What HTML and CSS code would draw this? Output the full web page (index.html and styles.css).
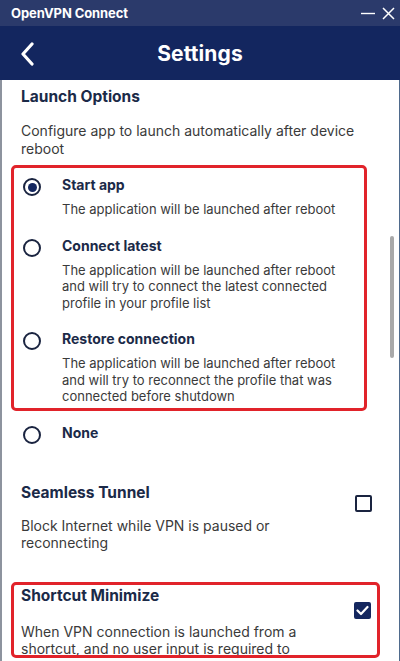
FILE: index.html
```html
<!DOCTYPE html>
<html lang="en">
<head>
<meta charset="utf-8">
<title>OpenVPN Connect - Settings</title>
<link rel="stylesheet" href="styles.css">
</head>
<body>
<div class="window">
  <div class="titlebar">
    <span class="app-name">OpenVPN Connect</span>
    <div class="win-controls">
      <svg class="win-btn" width="16" height="16" viewBox="0 0 16 16"><line x1="1" y1="8.5" x2="15" y2="8.5" stroke="#fff" stroke-width="1.4"/></svg>
      <svg class="win-btn" width="13" height="13" viewBox="0 0 13 13"><path d="M1 1 L12 12 M12 1 L1 12" stroke="#fff" stroke-width="1.5" fill="none"/></svg>
    </div>
  </div>
  <header class="header">
    <span class="back">
      <svg width="16" height="24" viewBox="0 0 16 24"><polyline points="12,2 3,12 12,22" fill="none" stroke="#fff" stroke-width="3.2" stroke-linecap="round" stroke-linejoin="round"/></svg>
    </span>
    <h1 class="page-title">Settings</h1>
  </header>
  <main class="content">
    <section class="section">
      <h2 class="section-title">Launch Options</h2>
      <p class="section-desc">Configure app to launch automatically after device reboot</p>
      <div class="highlight highlight-radios">
        <div class="option">
          <span class="radio checked"></span>
          <div class="option-body">
            <div class="option-label">Start app</div>
            <p class="option-desc">The application will be launched after reboot</p>
          </div>
        </div>
        <div class="option">
          <span class="radio"></span>
          <div class="option-body">
            <div class="option-label">Connect latest</div>
            <p class="option-desc">The application will be launched after reboot and will try to connect the latest connected profile in your profile list</p>
          </div>
        </div>
        <div class="option">
          <span class="radio"></span>
          <div class="option-body">
            <div class="option-label">Restore connection</div>
            <p class="option-desc">The application will be launched after reboot and will try to reconnect the profile that was connected before shutdown</p>
          </div>
        </div>
      </div>
      <div class="option option-none">
        <span class="radio"></span>
        <div class="option-body">
          <div class="option-label">None</div>
        </div>
      </div>
    </section>

    <section class="section toggle seamless">
      <div class="toggle-text">
        <h2 class="section-title">Seamless Tunnel</h2>
        <p class="section-desc">Block Internet while VPN is paused or reconnecting</p>
      </div>
      <span class="checkbox"></span>
    </section>

    <div class="highlight highlight-toggle">
      <section class="toggle shortcut">
        <div class="toggle-text">
          <h2 class="section-title">Shortcut Minimize</h2>
          <p class="section-desc">When VPN connection is launched from a shortcut, and no user input is required to</p>
        </div>
        <span class="checkbox checked">
          <svg width="13" height="11" viewBox="0 0 13 11"><polyline points="1.5,5.5 5,9 11.5,2" fill="none" stroke="#fff" stroke-width="2.2" stroke-linecap="round" stroke-linejoin="round"/></svg>
        </span>
      </section>
    </div>
  </main>
  <div class="scrollbar"></div>
</div>
</body>
</html>
```

FILE: styles.css
```css
* { box-sizing: border-box; }
html, body {
  margin: 0;
  padding: 0;
}
body {
  width: 400px;
  height: 661px;
  overflow: hidden;
  font-family: Inter, "Noto Sans", "Liberation Sans", sans-serif;
  background: #fff;
}
.window {
  position: relative;
  width: 400px;
  height: 661px;
  display: flex;
  flex-direction: column;
  overflow: hidden;
}
.titlebar {
  height: 26px;
  flex: 0 0 26px;
  background: #2b3a6b;
  display: flex;
  align-items: center;
  justify-content: space-between;
  padding: 0 5px 0 11px;
}
.app-name {
  color: #fff;
  font-weight: 700;
  font-size: 13px;
  letter-spacing: -0.1px;
}
.win-controls {
  display: flex;
  align-items: center;
  gap: 6px;
}
.win-btn { display: block; }
.header {
  height: 54px;
  flex: 0 0 54px;
  background: #13265f;
  display: flex;
  align-items: center;
  justify-content: center;
  position: relative;
}
.back {
  position: absolute;
  left: 20px;
  top: 16px;
  display: block;
  line-height: 0;
}
.page-title {
  margin: 0;
  color: #fff;
  font-size: 21px;
  font-weight: 700;
  letter-spacing: 0.1px;
}
.content {
  flex: 1;
  border-left: 2px solid #8d939e;
  border-right: 1px solid #4f6a8c;
  padding-top: 7px;
  overflow: hidden;
}
.section {
  padding-left: 19px;
}
.section-title {
  margin: 0;
  font-size: 15.5px;
  line-height: 20px;
  font-weight: 700;
  color: #1b2a48;
}
.section-desc {
  margin: 15px 0 0;
  font-size: 14px;
  line-height: 17.5px;
  color: #3a3a3a;
  padding-right: 20px;
}
.highlight {
  border: 3px solid #e1232a;
  border-radius: 5px;
}
.highlight-radios {
  margin: 8px 0 0 -10px;
  width: 356px;
  padding: 8px 0 3px 9px;
}
.option {
  display: flex;
  align-items: flex-start;
  gap: 21px;
}
.option + .option {
  margin-top: 19px;
}
.radio {
  flex: 0 0 18px;
  width: 18px;
  height: 18px;
  margin-top: 2px;
  border: 2px solid #1a2440;
  border-radius: 50%;
  display: flex;
  align-items: center;
  justify-content: center;
}
.radio.checked::after {
  content: "";
  width: 9px;
  height: 9px;
  border-radius: 50%;
  background: #14275f;
}
.option-label {
  font-size: 14px;
  line-height: 18px;
  font-weight: 700;
  color: #1b2a48;
}
.option-desc {
  margin: 7px 0 0;
  font-size: 13px;
  line-height: 16.5px;
  color: #3a3a3a;
  padding-right: 10px;
}
.option-none {
  margin: 13px 0 0 2px;
}
.toggle {
  display: flex;
  align-items: flex-start;
  justify-content: space-between;
}
.toggle-text {
  flex: 1;
}
.seamless {
  margin-top: 39px;
  padding-right: 27px;
}
.seamless .section-desc {
  margin-top: 14px;
}
.checkbox {
  flex: 0 0 17px;
  width: 17px;
  height: 17px;
  border: 2px solid #1a2440;
  border-radius: 2px;
  margin-top: 12px;
  display: flex;
  align-items: center;
  justify-content: center;
}
.checkbox.checked {
  background: #14275f;
  border-color: #14275f;
}
.highlight-toggle {
  margin: 30px 0 0 9px;
  width: 369px;
  height: 76px;
  padding: 1px 6px 0 7px;
  overflow: hidden;
}
.shortcut .checkbox {
  margin-top: 16px;
}
.shortcut .toggle-text {
  flex: 0 0 300px;
}
.shortcut .section-desc {
  margin-top: 17px;
  padding-right: 0;
}
.scrollbar {
  position: absolute;
  left: 390px;
  top: 236px;
  width: 4px;
  height: 122px;
  border-radius: 2px;
  background: #a9a9a9;
}
```
